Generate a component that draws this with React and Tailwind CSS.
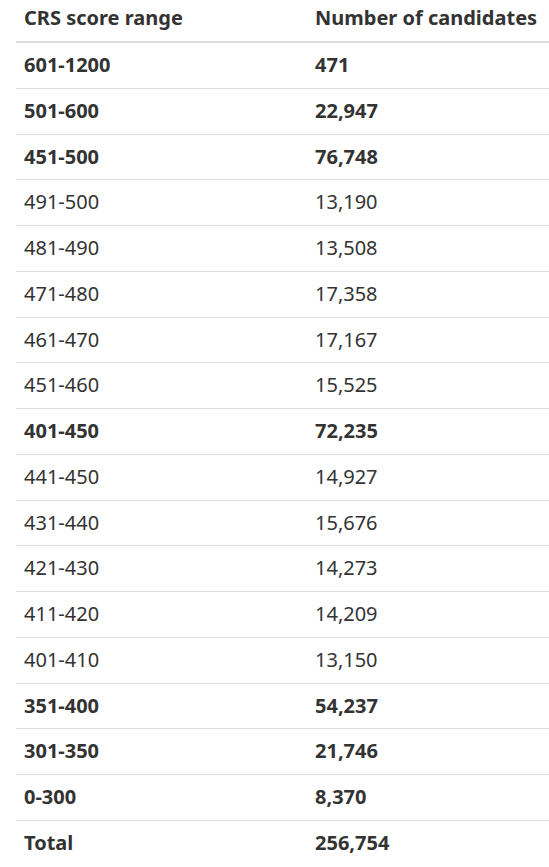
import React from "react";

const rows = [
  ["601-1200", "471", true],
  ["501-600", "22,947", true],
  ["451-500", "76,748", true],
  ["491-500", "13,190", false],
  ["481-490", "13,508", false],
  ["471-480", "17,358", false],
  ["461-470", "17,167", false],
  ["451-460", "15,525", false],
  ["401-450", "72,235", true],
  ["441-450", "14,927", false],
  ["431-440", "15,676", false],
  ["421-430", "14,273", false],
  ["411-420", "14,209", false],
  ["401-410", "13,150", false],
  ["351-400", "54,237", true],
  ["301-350", "21,746", true],
  ["0-300", "8,370", true],
  ["Total", "256,754", true],
];

export default function App() {
  return (
    <div
      className="w-[549px] h-[867px] overflow-hidden bg-white pl-4 text-[#333] text-[20px] leading-[28.75px]"
      style={{ fontFamily: '"Noto Sans", "Open Sans", sans-serif' }}
    >
      <div className="w-[560px]">
        <div className="flex h-[43px] border-b-2 border-[#ddd] font-bold">
          <div className="w-[291px] px-2 pt-[3.9px]">CRS score range</div>
          <div className="flex-1 px-2 pt-[3.9px] whitespace-nowrap">Number of candidates</div>
        </div>
        {rows.map(([range, count, bold], i) => (
          <div
            key={i}
            className={`flex h-[45.75px] pt-[8px] ${i < rows.length - 1 ? "border-b border-[#ddd]" : ""} ${bold ? "font-bold" : "font-normal"}`}
          >
            <div className="w-[291px] px-2">{range}</div>
            <div className="flex-1 px-2">{count}</div>
          </div>
        ))}
      </div>
    </div>
  );
}
